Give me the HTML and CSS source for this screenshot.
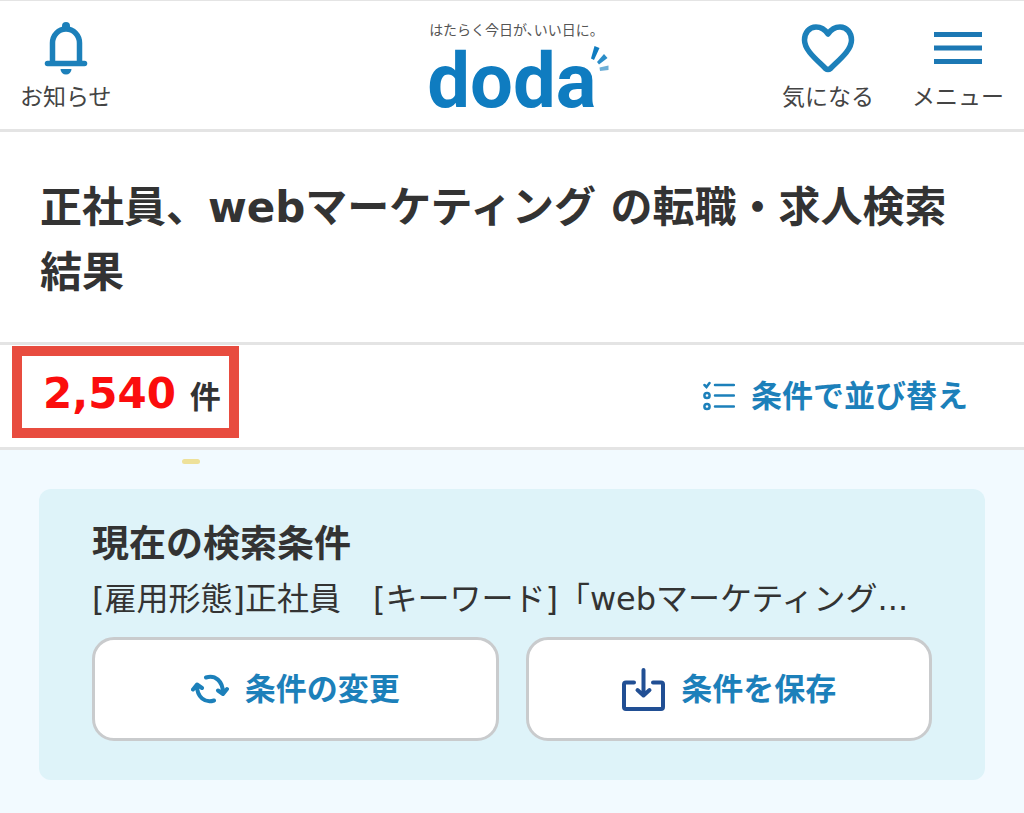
FILE: index.html
```html
<!DOCTYPE html>
<html lang="ja">
<head>
<meta charset="utf-8">
<meta name="viewport" content="width=device-width, initial-scale=1">
<title>正社員、webマーケティング の転職・求人検索結果</title>
<link rel="stylesheet" href="styles.css">
</head>
<body>
<header class="header">
  <nav class="nav nav-start">
    <a class="nav-item" href="#news">
      <svg class="nav-icon" viewBox="0 0 52 56" aria-hidden="true">
        <path d="M12.500 43V23a13.500 14 0 0 1 27 0v20" fill="none" stroke="#1c80ba" stroke-width="5.500"/>
        <path d="M22 10V6a4 4 0 0 1 8 0v4z" fill="#1c80ba"/>
        <path d="M7.500 43.500h37" stroke="#1c80ba" stroke-width="5.500" stroke-linecap="round"/>
        <path d="M20.500 49h11a5.500 5.500 0 0 1-11 0z" fill="#1c80ba"/>
      </svg>
      <span>お知らせ</span>
    </a>
  </nav>
  <a class="logo" href="#top">
    <span class="slogan">はたらく今日が、いい日に。</span>
    <span class="brand">doda<svg class="spark" viewBox="0 0 20 28" aria-hidden="true">
      <path d="M4.500 1l5 2-5.500 12-3-1.500z" fill="#0f7cc0"/>
      <path d="M14 9l3.500 4-8.500 6.500-2-2.500z" fill="#2b8dc8"/>
      <path d="M9.500 22.500l9-2v4.500l-8.500 1z" fill="#6fafd6"/>
    </svg></span>
  </a>
  <nav class="nav nav-end">
    <a class="nav-item" href="#favorites">
      <svg class="nav-icon" viewBox="0 0 56 56" aria-hidden="true">
        <path d="M28 14C24 8 19.500 7 16 7C9 7 4.500 13 4.500 20C4.500 30.500 17 40 25.500 48.500Q28 50.500 30.500 48.500C39 40 51.500 30.500 51.500 20C51.500 13 47 7 40 7C36.500 7 32 8 28 14z" fill="none" stroke="#1c80ba" stroke-width="5.500" stroke-linejoin="round"/>
      </svg>
      <span>気になる</span>
    </a>
    <a class="nav-item" href="#menu">
      <svg class="nav-icon" viewBox="0 0 48 56" aria-hidden="true">
        <path d="M0 14.500h48M0 28h48M0 41.500h48" stroke="#1c78b4" stroke-width="5"/>
      </svg>
      <span>メニュー</span>
    </a>
  </nav>
</header>
<main>
  <div class="title-block">
    <h1 class="title">正社員、webマーケティング の転職・求人検索結果</h1>
  </div>
  <div class="result-bar">
    <p class="count"><strong class="count-number">2,540</strong><span>件</span></p>
    <button class="sort" type="button">
      <svg class="sort-icon" viewBox="0 0 32 30" aria-hidden="true" fill="none" stroke="#1c80ba" stroke-width="2.500" stroke-linecap="round">
        <path d="M1.500 4l2 2 3-4M12 4h19M12 14.500h19M12 25.500h19"/>
        <circle cx="4" cy="14.500" r="2.600"/>
        <circle cx="4" cy="25.500" r="2.600"/>
      </svg>
      <span>条件で並び替え</span>
    </button>
  </div>
  <div class="content">
    <span class="marker"></span>
    <section class="card">
      <h2 class="card-title">現在の検索条件</h2>
      <p class="card-text">[雇用形態]正社員　[キーワード]「webマーケティング...</p>
      <div class="actions">
        <button class="action" type="button">
          <svg class="change-icon" viewBox="0 0 38 30" aria-hidden="true" fill="none" stroke="#1c80ba" stroke-width="4" stroke-linecap="round" stroke-linejoin="round">
            <path d="M15 3.500C24 .5 32 7 32 19M27 16.500l5 3.500 4-5"/>
            <path d="M23 26.500C14 29.500 6 23 6 12M2 15.500l4-5 5 3.500"/>
          </svg>
          <span>条件の変更</span>
        </button>
        <button class="action" type="button">
          <svg class="save-icon" viewBox="0 0 44 44" aria-hidden="true" fill="none" stroke="#214f94" stroke-width="4" stroke-linecap="round" stroke-linejoin="round">
            <path d="M13 15.500H5Q3 15.500 3 17.500V40Q3 42 5 42H40Q42 42 42 40V17.500Q42 15.500 40 15.500H32M22.500 3v24M16.500 23l6 5.500 6-5.500"/>
          </svg>
          <span>条件を保存</span>
        </button>
      </div>
    </section>
  </div>
</main>
</body>
</html>
```

FILE: styles.css
```css
* {
  box-sizing: border-box;
}

body {
  margin: 0;
  min-height: 100vh;
  display: flex;
  flex-direction: column;
  background: #f2faff;
  color: #333;
  font-family: "DejaVu Sans", "Noto Sans CJK JP", sans-serif;
}

h1, h2, p {
  margin: 0;
}

a {
  color: inherit;
  text-decoration: none;
}

button {
  font: inherit;
  cursor: pointer;
}

svg {
  display: block;
  flex: none;
}

.header {
  display: grid;
  grid-template-columns: 1fr auto 1fr;
  align-items: start;
  padding: 19px 20px 12px;
  background: #fff;
  border-top: 1px solid #e4e4e4;
  border-bottom: 3px solid #e4e4e4;
}

.nav {
  display: flex;
  gap: 38px;
}

.nav-end {
  justify-content: flex-end;
}

.nav-item {
  display: flex;
  flex-direction: column;
  align-items: center;
  font-family: "Noto Sans CJK JP", sans-serif;
  font-size: 23px;
  line-height: 38px;
  color: #444;
}

.nav-icon {
  height: 56px;
}

.logo {
  display: flex;
  flex-direction: column;
  align-items: flex-start;
  gap: 7px;
  font-family: "Noto Sans CJK JP", sans-serif;
}

.slogan {
  padding-left: 2px;
  font-size: 14px;
  line-height: 18px;
  font-feature-settings: "halt";
  color: #555;
}

.brand {
  position: relative;
  font-family: Roboto, sans-serif;
  font-size: 76px;
  font-weight: 700;
  line-height: 72px;
  color: #0f7cc0;
}

.spark {
  position: absolute;
  top: 0;
  right: -14px;
  width: 20px;
}

.title-block {
  padding: 43px 40px 37px;
  background: #fff;
  border-bottom: 3px solid #e4e4e4;
}

.title {
  font-size: 42px;
  line-height: 65px;
  font-weight: 700;
}

.result-bar {
  display: flex;
  align-items: flex-start;
  justify-content: space-between;
  padding: 1px 56px 9px 12px;
  background: #fff;
  border-bottom: 3px solid #e4e4e4;
}

.count {
  display: flex;
  align-items: baseline;
  gap: 14px;
  padding: 7px 8px 0 21px;
  border: 10px solid #e84c3f;
  font-size: 31px;
  font-weight: 700;
  line-height: 62px;
}

.count-number {
  font-size: 42px;
  font-weight: 700;
  color: #fb0d0d;
}

.sort {
  display: flex;
  align-items: center;
  align-self: center;
  gap: 16px;
  padding: 8px 0 0;
  border: 0;
  background: none;
  color: #1c80ba;
  font-size: 31px;
  font-weight: 700;
  line-height: 40px;
}

.sort-icon {
  width: 32px;
}

.content {
  position: relative;
  padding: 39px 39px 33px;
}

.marker {
  position: absolute;
  top: 9px;
  left: 182px;
  width: 18px;
  height: 5px;
  border-radius: 3px;
  background: #eee19a;
}

.card {
  padding: 34px 53px 39px;
  border-radius: 12px;
  background: #def3f9;
}

.card-title {
  font-size: 37px;
  font-weight: 700;
  line-height: 44px;
}

.card-text {
  padding: 10px 0 16px;
  font-size: 32px;
  line-height: 44px;
  white-space: nowrap;
  overflow: hidden;
}

.actions {
  display: grid;
  grid-template-columns: 1fr 1fr;
  gap: 27px;
}

.action {
  display: flex;
  align-items: center;
  justify-content: center;
  gap: 16px;
  padding: 26px 0;
  border: 3px solid #c9cbcd;
  border-radius: 22px;
  background: #fff;
  color: #1c80ba;
  font-size: 31px;
  font-weight: 700;
  line-height: 46px;
}

.change-icon {
  width: 38px;
}

.save-icon {
  width: 44px;
}
```
